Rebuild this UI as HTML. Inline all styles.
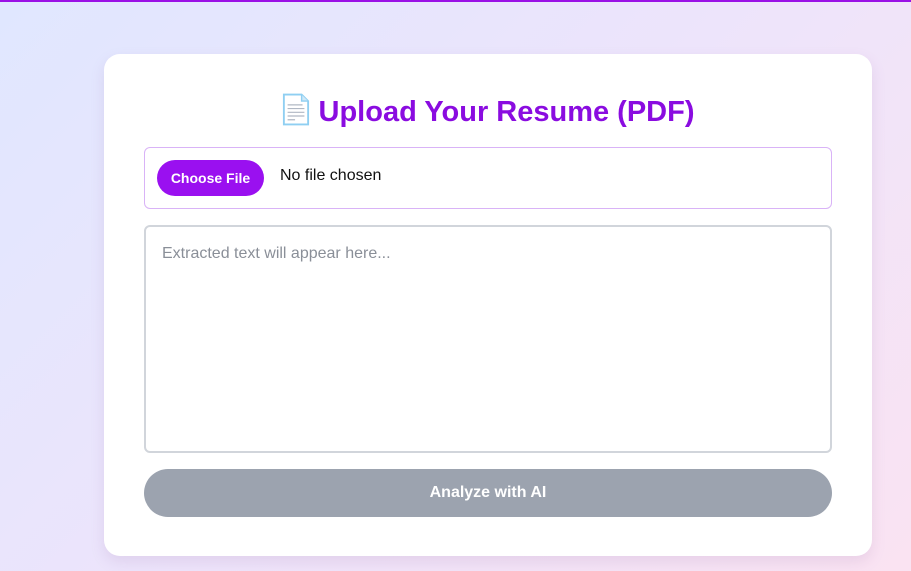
<!DOCTYPE html>
<html><head><meta charset="utf-8"><style>
*{box-sizing:border-box;margin:0;padding:0}
html,body{width:911px;height:571px;overflow:hidden}
body{font-family:"Liberation Sans",sans-serif;background:linear-gradient(135deg,#e0e7ff 0%,#ede4fb 50%,#fae3f2 100%);position:relative}
.bar{position:absolute;left:0;top:0;width:911px;height:2px;background:#9a10e6}
.card{position:absolute;left:104px;top:54px;width:768px;height:502px;background:#fff;border-radius:16px;box-shadow:0 6px 14px rgba(150,100,160,.15)}
h1{position:absolute;left:0;right:0;top:39px;text-align:center;color:#8a0ce0;font-size:29px;font-weight:bold}
h1 svg{vertical-align:-5px;margin-right:9px}
.file{position:absolute;left:40px;top:93px;width:688px;height:62px;border:1px solid #d9b3f7;border-radius:6px}
.btn{position:absolute;left:12px;top:12px;width:107px;height:36px;background:#9a10f0;color:#fff;border-radius:18px;font-size:14px;font-weight:bold;text-align:center;line-height:36px}
.nf{position:absolute;left:135px;top:19px;font-size:16px;color:#111}
.ta{position:absolute;left:40px;top:171px;width:688px;height:228px;border:2px solid #d1d5db;border-radius:6px}
.ta span{position:absolute;left:16px;top:18px;font-size:16px;color:#8a8f98}
.an{position:absolute;left:40px;top:415px;width:688px;height:48px;background:#9ca3af;border-radius:24px;color:#fff;font-weight:bold;font-size:16px;text-align:center;line-height:48px}
</style></head><body>
<div class="bar"></div>
<div class="card">
<h1><svg width="28" height="33" viewBox="0 0 30 34"><path d="M2 1h19l7 7v25H2z" fill="#fff" stroke="#8fcff2" stroke-width="2"/><path d="M21 1v7h7" fill="#cfe9f8" stroke="#8fcff2" stroke-width="1.5"/><path d="M6 12h16M6 16h18M6 20h18M6 24h18M6 28h8" stroke="#b0b8c4" stroke-width="1.3"/></svg>Upload Your Resume (PDF)</h1>
<div class="file"><div class="btn">Choose File</div><div class="nf">No file chosen</div></div>
<div class="ta"><span>Extracted text will appear here...</span></div>
<div class="an">Analyze with AI</div>
</div>
</body></html>
